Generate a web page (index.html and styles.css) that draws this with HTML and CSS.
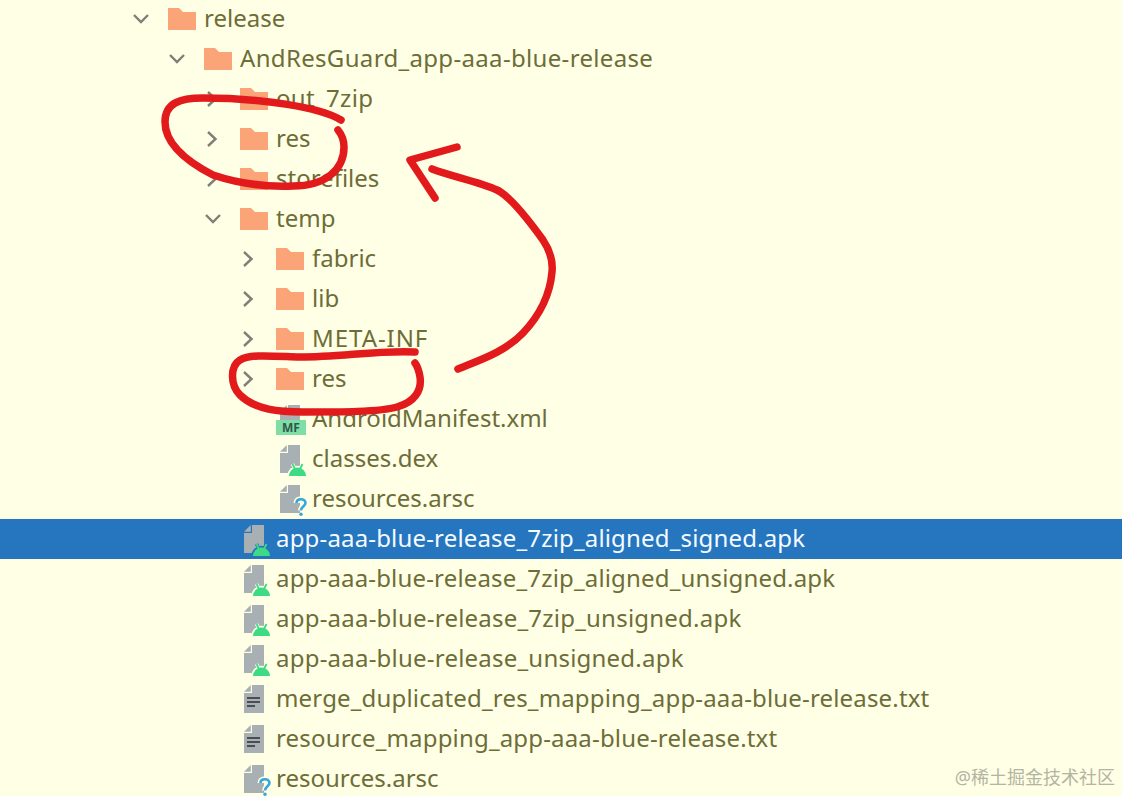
FILE: index.html
```html
<!DOCTYPE html>
<html lang="en">
<head>
<meta charset="utf-8">
<title>Project tree</title>
<link rel="stylesheet" href="styles.css">
</head>
<body>
<svg class="defs" width="0" height="0" aria-hidden="true">
  <symbol id="folder" viewBox="0 0 28 22"><path d="M0 0H11L15 4H28V22H0Z" fill="#fba478"/></symbol>
  <symbol id="open" viewBox="0 0 18 18"><path d="M2 5L9 12L16 5" fill="none" stroke="#7d7f78" stroke-width="2.4"/></symbol>
  <symbol id="closed" viewBox="0 0 18 18"><path d="M4 2L11.500 9L4 16" fill="none" stroke="#7d7f78" stroke-width="2.400"/></symbol>
  <symbol id="file" viewBox="0 0 20 28"><path d="M8 0H20V28H0V8H8Z" fill="#a9b0b4"/><path d="M6.800 0V6.800H0Z" fill="#a9b0b4"/></symbol>
  <symbol id="android" viewBox="-2 -2 21 17"><path d="M0 13A8.500 8.500 0 0 1 17 13ZM3.500 1L6 6M13.500 1L11 6" fill="none" stroke="var(--bg)" stroke-width="3.500"/><path d="M0 13A8.500 8.500 0 0 1 17 13Z" fill="#3ddc84"/><path d="M3.500 1L6 6M13.500 1L11 6" stroke="#3ddc84" stroke-width="1.800"/></symbol>
  <symbol id="help" viewBox="-2 -2 16 22"><path d="M1.500 5C1.500 2.500 3.500 1.200 6 1.200S10.500 2.800 10.500 5C10.500 8 6 8.500 6 12.500" fill="none" stroke="var(--bg)" stroke-width="6"/><path d="M1.500 5C1.500 2.500 3.500 1.200 6 1.200S10.500 2.800 10.500 5C10.500 8 6 8.500 6 12.500" fill="none" stroke="#35a7dc" stroke-width="2.600"/><circle cx="6" cy="16.300" r="1.700" fill="#35a7dc"/></symbol>
  <symbol id="lines" viewBox="0 0 13 10"><path d="M0 1H13M0 5H13M0 9H8" stroke="#4a4e52" stroke-width="2"/></symbol>
</svg>

<main class="tree">
  <div class="row d0"><svg class="chev"><use href="#open"/></svg><svg class="folder"><use href="#folder"/></svg><span>release</span></div>
  <div class="row d1"><svg class="chev"><use href="#open"/></svg><svg class="folder"><use href="#folder"/></svg><span class="ls-l">AndResGuard_app-aaa-blue-release</span></div>
  <div class="row d2"><svg class="chev"><use href="#closed"/></svg><svg class="folder"><use href="#folder"/></svg><span class="ls-l">out_7zip</span></div>
  <div class="row d2"><svg class="chev"><use href="#closed"/></svg><svg class="folder"><use href="#folder"/></svg><span>res</span></div>
  <div class="row d2"><svg class="chev"><use href="#closed"/></svg><svg class="folder"><use href="#folder"/></svg><span>storefiles</span></div>
  <div class="row d2"><svg class="chev"><use href="#open"/></svg><svg class="folder"><use href="#folder"/></svg><span>temp</span></div>
  <div class="row d3"><svg class="chev"><use href="#closed"/></svg><svg class="folder"><use href="#folder"/></svg><span>fabric</span></div>
  <div class="row d3"><svg class="chev"><use href="#closed"/></svg><svg class="folder"><use href="#folder"/></svg><span>lib</span></div>
  <div class="row d3"><svg class="chev"><use href="#closed"/></svg><svg class="folder"><use href="#folder"/></svg><span class="ls-x">META-INF</span></div>
  <div class="row d3"><svg class="chev"><use href="#closed"/></svg><svg class="folder"><use href="#folder"/></svg><span>res</span></div>
  <div class="row d3 leaf"><div class="icon"><svg class="file"><use href="#file"/></svg><b class="mf">MF</b></div><span>AndroidManifest.xml</span></div>
  <div class="row d3 leaf"><div class="icon"><svg class="file"><use href="#file"/></svg><svg class="android"><use href="#android"/></svg></div><span>classes.dex</span></div>
  <div class="row d3 leaf"><div class="icon"><svg class="file"><use href="#file"/></svg><svg class="help"><use href="#help"/></svg></div><span>resources.arsc</span></div>
  <div class="row d2 leaf selected"><div class="icon"><svg class="file"><use href="#file"/></svg><svg class="android"><use href="#android"/></svg></div><span class="ls-s">app-aaa-blue-release_7zip_aligned_signed.apk</span></div>
  <div class="row d2 leaf"><div class="icon"><svg class="file"><use href="#file"/></svg><svg class="android"><use href="#android"/></svg></div><span class="ls-s">app-aaa-blue-release_7zip_aligned_unsigned.apk</span></div>
  <div class="row d2 leaf"><div class="icon"><svg class="file"><use href="#file"/></svg><svg class="android"><use href="#android"/></svg></div><span class="ls-m">app-aaa-blue-release_7zip_unsigned.apk</span></div>
  <div class="row d2 leaf"><div class="icon"><svg class="file"><use href="#file"/></svg><svg class="android"><use href="#android"/></svg></div><span class="ls-m">app-aaa-blue-release_unsigned.apk</span></div>
  <div class="row d2 leaf"><div class="icon"><svg class="file"><use href="#file"/></svg><svg class="lines"><use href="#lines"/></svg></div><span class="ls-s">merge_duplicated_res_mapping_app-aaa-blue-release.txt</span></div>
  <div class="row d2 leaf"><div class="icon"><svg class="file"><use href="#file"/></svg><svg class="lines"><use href="#lines"/></svg></div><span class="ls-s">resource_mapping_app-aaa-blue-release.txt</span></div>
  <div class="row d2 leaf"><div class="icon"><svg class="file"><use href="#file"/></svg><svg class="help"><use href="#help"/></svg></div><span>resources.arsc</span></div>
</main>

<svg class="ink" viewBox="0 0 1122 796" aria-hidden="true">
  <path d="M341 120C320 107 260 98 203 98C180 98 165 103 165 122C165 140 180 158 213 175C240 184 270 187 293 186C325 186 344 170 344 147C344 140 342 135 338 130"/>
  <path d="M415 352C380 350 340 357 300 357C270 356 250 354 240 360C230 366 230 385 240 395C255 410 280 412 303 412C340 412 380 412 397 407C415 402 422 390 420 377C419 371 418 367 415 363"/>
  <path d="M457 147L410 160L435 198"/>
  <path d="M432 169C450 176 480 182 497 190C510 196 530 222 543 240C551 252 553 262 552 272C550 295 540 315 523 333C505 352 480 360 458 369"/>
</svg>

<div class="mark">@稀土掘金技术社区</div>
</body>
</html>
```
FILE: styles.css
```css
html, body {
  margin: 0;
  height: 100%;
  overflow: hidden;
  background: #ffffe5;
}
body {
  --bg: #ffffe5;
  position: relative;
  font-family: "Noto Sans", "Noto Sans CJK SC", sans-serif;
}
.defs { display: block; height: 0; }
.tree { display: flex; flex-direction: column; margin-top: -1px; }
.row {
  display: flex;
  align-items: center;
  height: 40px;
  font-size: 24px;
  color: #6d6d38;
  white-space: nowrap;
}
.row span { padding-bottom: 4px; }
.ls-s { letter-spacing: 0.17px; }
.ls-m { letter-spacing: 0.22px; }
.ls-l { letter-spacing: 0.33px; }
.ls-x { letter-spacing: 0.95px; }
.d0 { padding-left: 132px; }
.d1 { padding-left: 168px; }
.d2 { padding-left: 204px; }
.d3 { padding-left: 240px; }
.chev { width: 18px; height: 18px; margin-right: 18px; flex: none; }
.folder { width: 28px; height: 22px; margin-right: 8px; flex: none; }
.icon { position: relative; width: 36px; height: 40px; margin-left: 36px; flex: none; }
.selected { --bg: #2675bf; background: #2675bf; color: #f4fbff; }
.file { position: absolute; left: 4px; top: 6px; width: 20px; height: 28px; }
.mf {
  position: absolute; left: 0; top: 21px; width: 30px; height: 15px;
  background: #7fdda6; color: #2f5a48;
  font: 700 12px/15px "Noto Sans", sans-serif; text-align: center;
}
.android { position: absolute; left: 11px; top: 22px; width: 21px; height: 17px; }
.help { position: absolute; left: 17px; top: 17px; width: 16px; height: 22px; }
.lines { position: absolute; left: 7px; top: 18px; width: 13px; height: 10px; }
.ink {
  position: absolute; left: 0; top: 0; width: 1122px; height: 796px;
  fill: none; stroke: #e21a1c; stroke-width: 7.500; stroke-linecap: round; stroke-linejoin: round;
}
.mark {
  position: absolute; right: 7px; bottom: 7px;
  font-size: 18px; line-height: 24px; color: #b4b4a2;
}
```
